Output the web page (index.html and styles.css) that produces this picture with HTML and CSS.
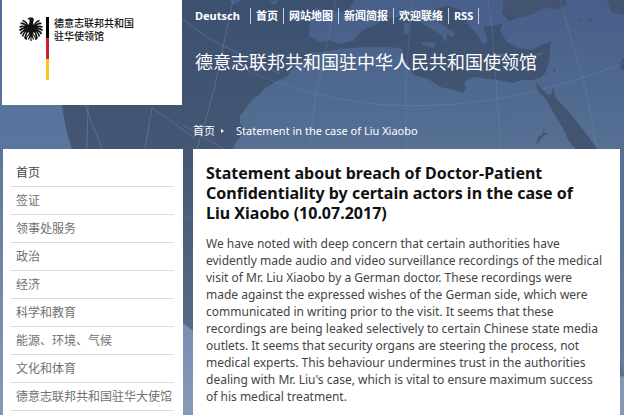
FILE: index.html
```html
<!DOCTYPE html>
<html lang="zh">
<head>
<meta charset="utf-8">
<title>Statement in the case of Liu Xiaobo</title>
<link rel="stylesheet" href="styles.css">
</head>
<body>
<svg class="map" viewBox="0 0 624 415" preserveAspectRatio="xMinYMin slice" aria-hidden="true">
  <defs>
    <linearGradient id="sky" x1="0" y1="0" x2="0" y2="1">
      <stop offset="0" stop-color="#4f6b96"/>
      <stop offset=".36" stop-color="#5b769e"/>
      <stop offset="1" stop-color="#8799ba"/>
    </linearGradient>
    <linearGradient id="sea" x1="0" y1="0" x2="0" y2="1">
      <stop offset="0" stop-color="#3c5070"/>
      <stop offset=".36" stop-color="#445673"/>
      <stop offset="1" stop-color="#5e718e"/>
    </linearGradient>
    <linearGradient id="land" gradientUnits="userSpaceOnUse" x1="0" y1="0" x2="0" y2="415">
      <stop offset="0" stop-color="#475f89"/>
      <stop offset=".36" stop-color="#566f93"/>
      <stop offset="1" stop-color="#6a7f9f"/>
    </linearGradient>
  </defs>
  <rect width="624" height="415" fill="url(#sky)"/>
  <path d="M62 0V105Q65 130 72 149Q100 260 193 331Q390 440 624 376V0Z" fill="url(#sea)"/>
  <g fill="url(#land)">
    <path d="M233 149L236 142 246 130 240 124 240 116 246 108 252 100 259 95 265 88 277 81 288 76 294 66 303 60 309 53 322 52 340 49 365 47 391 47 403 49 402 58 409 66 413 75 428 79 440 87 450 89 463 93 466 88 464 82 474 77 487 79 498 80 513 83 522 80 533 80 541 77 546 72 549 61 551 41 541 45 532 50 519 48 507 42 500 31 503 23 517 18 535 11 546 8 556 9 566 4 566 0H624V375Q590 250 597 148L583 130 570 113 562 105 555 97 553 88 551 96 547 94 536 83 538 91 546 99 550 106 558 120 563 128 569 141 576 149Z"/>
    <path d="M310 21L315 8 329 10 347 13 354 0H505L502 13 509 22 497 25 483 27 488 40 484 45 476 33 467 23 461 10 449 6 438 8 429 15 444 26 456 34 452 37 447 34 446 43 440 34 428 27 415 18 405 15 391 18 384 16 378 24 363 30 353 41 339 44 330 40 320 42 309 36Z"/>
    <path d="M404 22l5 2 0 9-5 2zM421 42l16 1-4 5-10-3zM493 53l12 1-2 2-9-1zM536 54l7-2-3 4z"/>
    <path d="M230 0l12 0-8 5zM268 1l11-1-4 5z"/>
  </g>
  <g fill="#42546f">
    <path d="M502 12L504 0H565L564 7 552 8 541 8 534 14 523 17 512 18Z"/>
    <path d="M607 0H624V15L611 12ZM577 17l4 3-2 1zM588 17l6 5-5-2zM624 58l-4 5 1 6 3 1zM553 70l2-2 0 5zM545 124l-2 8 5 2-5 2-7 9 2-7 6-6z"/>
    <path d="M536 83L547 94 551 96 553 88 555 97 562 105 570 113 574 119 583 130 590 140 597 149H576L569 141 563 128 558 120 550 106 546 99 538 91Z"/>
  </g>
  <g fill="none" stroke="#8eabc9" stroke-opacity=".3">
    <path d="M233 0L214 90 197 149M181 18L208 38 280 74M183 125L224 149M85 105L102 149M88 105L87 149M152 108L145 149M152 108L195 138"/>
    <path d="M336 0L316 94 309 149M412 0L406 80 406 149M488 0L492 28 501 149M560 0L586 90 597 149" stroke-opacity=".2"/>
    <path d="M225 60Q400 150 624 63M183 215L193 219" stroke-opacity=".18"/>
  </g>
</svg>

<div class="page">
  <a class="brand" href="#">
    <svg class="eagle" viewBox="0 0 48 48" aria-hidden="true">
      <path d="M21 5l-5-1 5-3 6 0 3 4-2 6 2 6 0 12-3 6-3 5-3-5-3-6 0-12 3-6z"/>
      <path d="M18 21Q16 9 7 7M17 23Q12 11 3 13M17 24Q11 16 1 20M17 25Q9 20 1 27M18 26Q9 24 3 34M18 27Q11 27 7 39M19 28Q15 29 12 42M30 21Q32 9 41 7M31 23Q36 11 45 13M31 24Q37 16 47 20M31 25Q39 20 47 27M30 26Q39 24 45 34M30 27Q37 27 41 39M29 28Q33 29 36 42" fill="none" stroke="#111" stroke-width="3.4"/>
      <path d="M21 33L15 41M27 33L33 41M23 34L19 45M25 34L29 45M24 34V48M15 41l-4 2M15 41l-1 5M33 41l4 2M33 41l1 5" fill="none" stroke="#111" stroke-width="2.4"/>
    </svg>
    <span class="flag"></span>
    <span class="brand-name">德意志联邦共和国<br>驻华使领馆</span>
  </a>

  <header class="head">
    <nav class="meta">
      <a href="#" class="wide">Deutsch</a><a href="#">首页</a><a href="#">网站地图</a><a href="#">新闻简报</a><a href="#">欢迎联络</a><a href="#">RSS</a>
    </nav>
    <p class="site-title">德意志联邦共和国驻中华人民共和国使领馆</p>
    <nav class="crumbs">
      <a href="#">首页</a><span class="arrow"></span><span>Statement in the case of Liu Xiaobo</span>
    </nav>
  </header>

  <nav class="side">
    <ul>
      <li><a class="current" href="#">首页</a></li>
      <li><a href="#">签证</a></li>
      <li><a href="#">领事处服务</a></li>
      <li><a href="#">政治</a></li>
      <li><a href="#">经济</a></li>
      <li><a href="#">科学和教育</a></li>
      <li><a href="#">能源、环境、气候</a></li>
      <li><a href="#">文化和体育</a></li>
      <li><a href="#">德意志联邦共和国驻华大使馆</a></li>
    </ul>
  </nav>

  <main class="content" lang="en">
    <h1>Statement about breach of Doctor-Patient<br>Confidentiality by certain actors in the case of<br>Liu Xiaobo (10.07.2017)</h1>
    <p>We have noted with deep concern that certain authorities have<br>evidently made audio and video surveillance recordings of the medical<br>visit of Mr. Liu Xiaobo by a German doctor. These recordings were<br>made against the expressed wishes of the German side, which were<br>communicated in writing prior to the visit. It seems that these<br>recordings are being leaked selectively to certain Chinese state media<br>outlets. It seems that security organs are steering the process, not<br>medical experts. This behaviour undermines trust in the authorities<br>dealing with Mr. Liu's case, which is vital to ensure maximum success<br>of his medical treatment.</p>
  </main>
</div>
</body>
</html>
```
FILE: styles.css
```css
* {
  box-sizing: border-box;
}

body {
  margin: 0;
  background: #8799ba;
  font-family: "Noto Sans", "Noto Sans CJK SC", sans-serif;
  font-size: 12px;
  color: #444;
}

a {
  color: inherit;
  text-decoration: none;
}

.map {
  position: absolute;
  z-index: -1;
  inset: 0;
  width: 100%;
  height: 100%;
}

.page {
  display: grid;
  grid-template-columns: 180px 1fr;
  grid-template-rows: auto 1fr;
  column-gap: 10px;
  min-height: 100vh;
  padding: 0 4px 0 3px;
}

.brand {
  display: flex;
  align-items: flex-start;
  height: 105px;
  margin: 0 1px 44px -1px;
  padding: 17px 0 0 17px;
  background: #fff;
  color: #111;
}

.eagle {
  width: 24px;
  height: 24px;
  margin-right: 3px;
  fill: #111;
}

.flag {
  width: 3px;
  height: 63px;
  margin-right: 5px;
  background: linear-gradient(#000 0 33%, #c8202f 33% 67%, #f5c51b 67%);
}

.brand-name {
  font-size: 10px;
  font-weight: 500;
  line-height: 13px;
}

.head {
  display: flex;
  flex-direction: column;
  color: #fff;
  white-space: nowrap;
}

.meta {
  display: flex;
  padding: 8px 0 0 2px;
  font-size: 11px;
  font-weight: 700;
  line-height: 16px;
}

.meta a {
  margin-right: 5px;
  padding-right: 5px;
  border-right: 1px solid #c3cfdf;
}

.meta .wide {
  padding-right: 10px;
}

.site-title {
  margin: 25px 0 0 2px;
  font-size: 18px;
  line-height: 26px;
}

.crumbs {
  display: flex;
  align-items: center;
  margin-top: 48px;
  font-size: 11px;
  line-height: 16px;
}

.arrow {
  margin: 0 12px 0 6px;
  border: 2px solid transparent;
  border-left: 3px solid #fff;
  border-right: 0;
}

.side,
.content {
  background: #fff;
}

.side {
  padding: 10px 9px 0 8px;
}

.side ul {
  margin: 0;
  padding: 0;
  list-style: none;
}

.side a {
  display: block;
  padding: 5px 0 5px 5px;
  border-bottom: 1px solid #ddd;
  color: #707070;
  line-height: 17px;
  white-space: nowrap;
}

.side .current {
  color: #444;
}

.content {
  padding: 14px 13px 0;
  white-space: nowrap;
}

h1 {
  margin: 0 0 12px;
  color: #111;
  font-size: 16px;
  line-height: 20px;
}

.content p {
  margin: 0;
  line-height: 17px;
}
```
